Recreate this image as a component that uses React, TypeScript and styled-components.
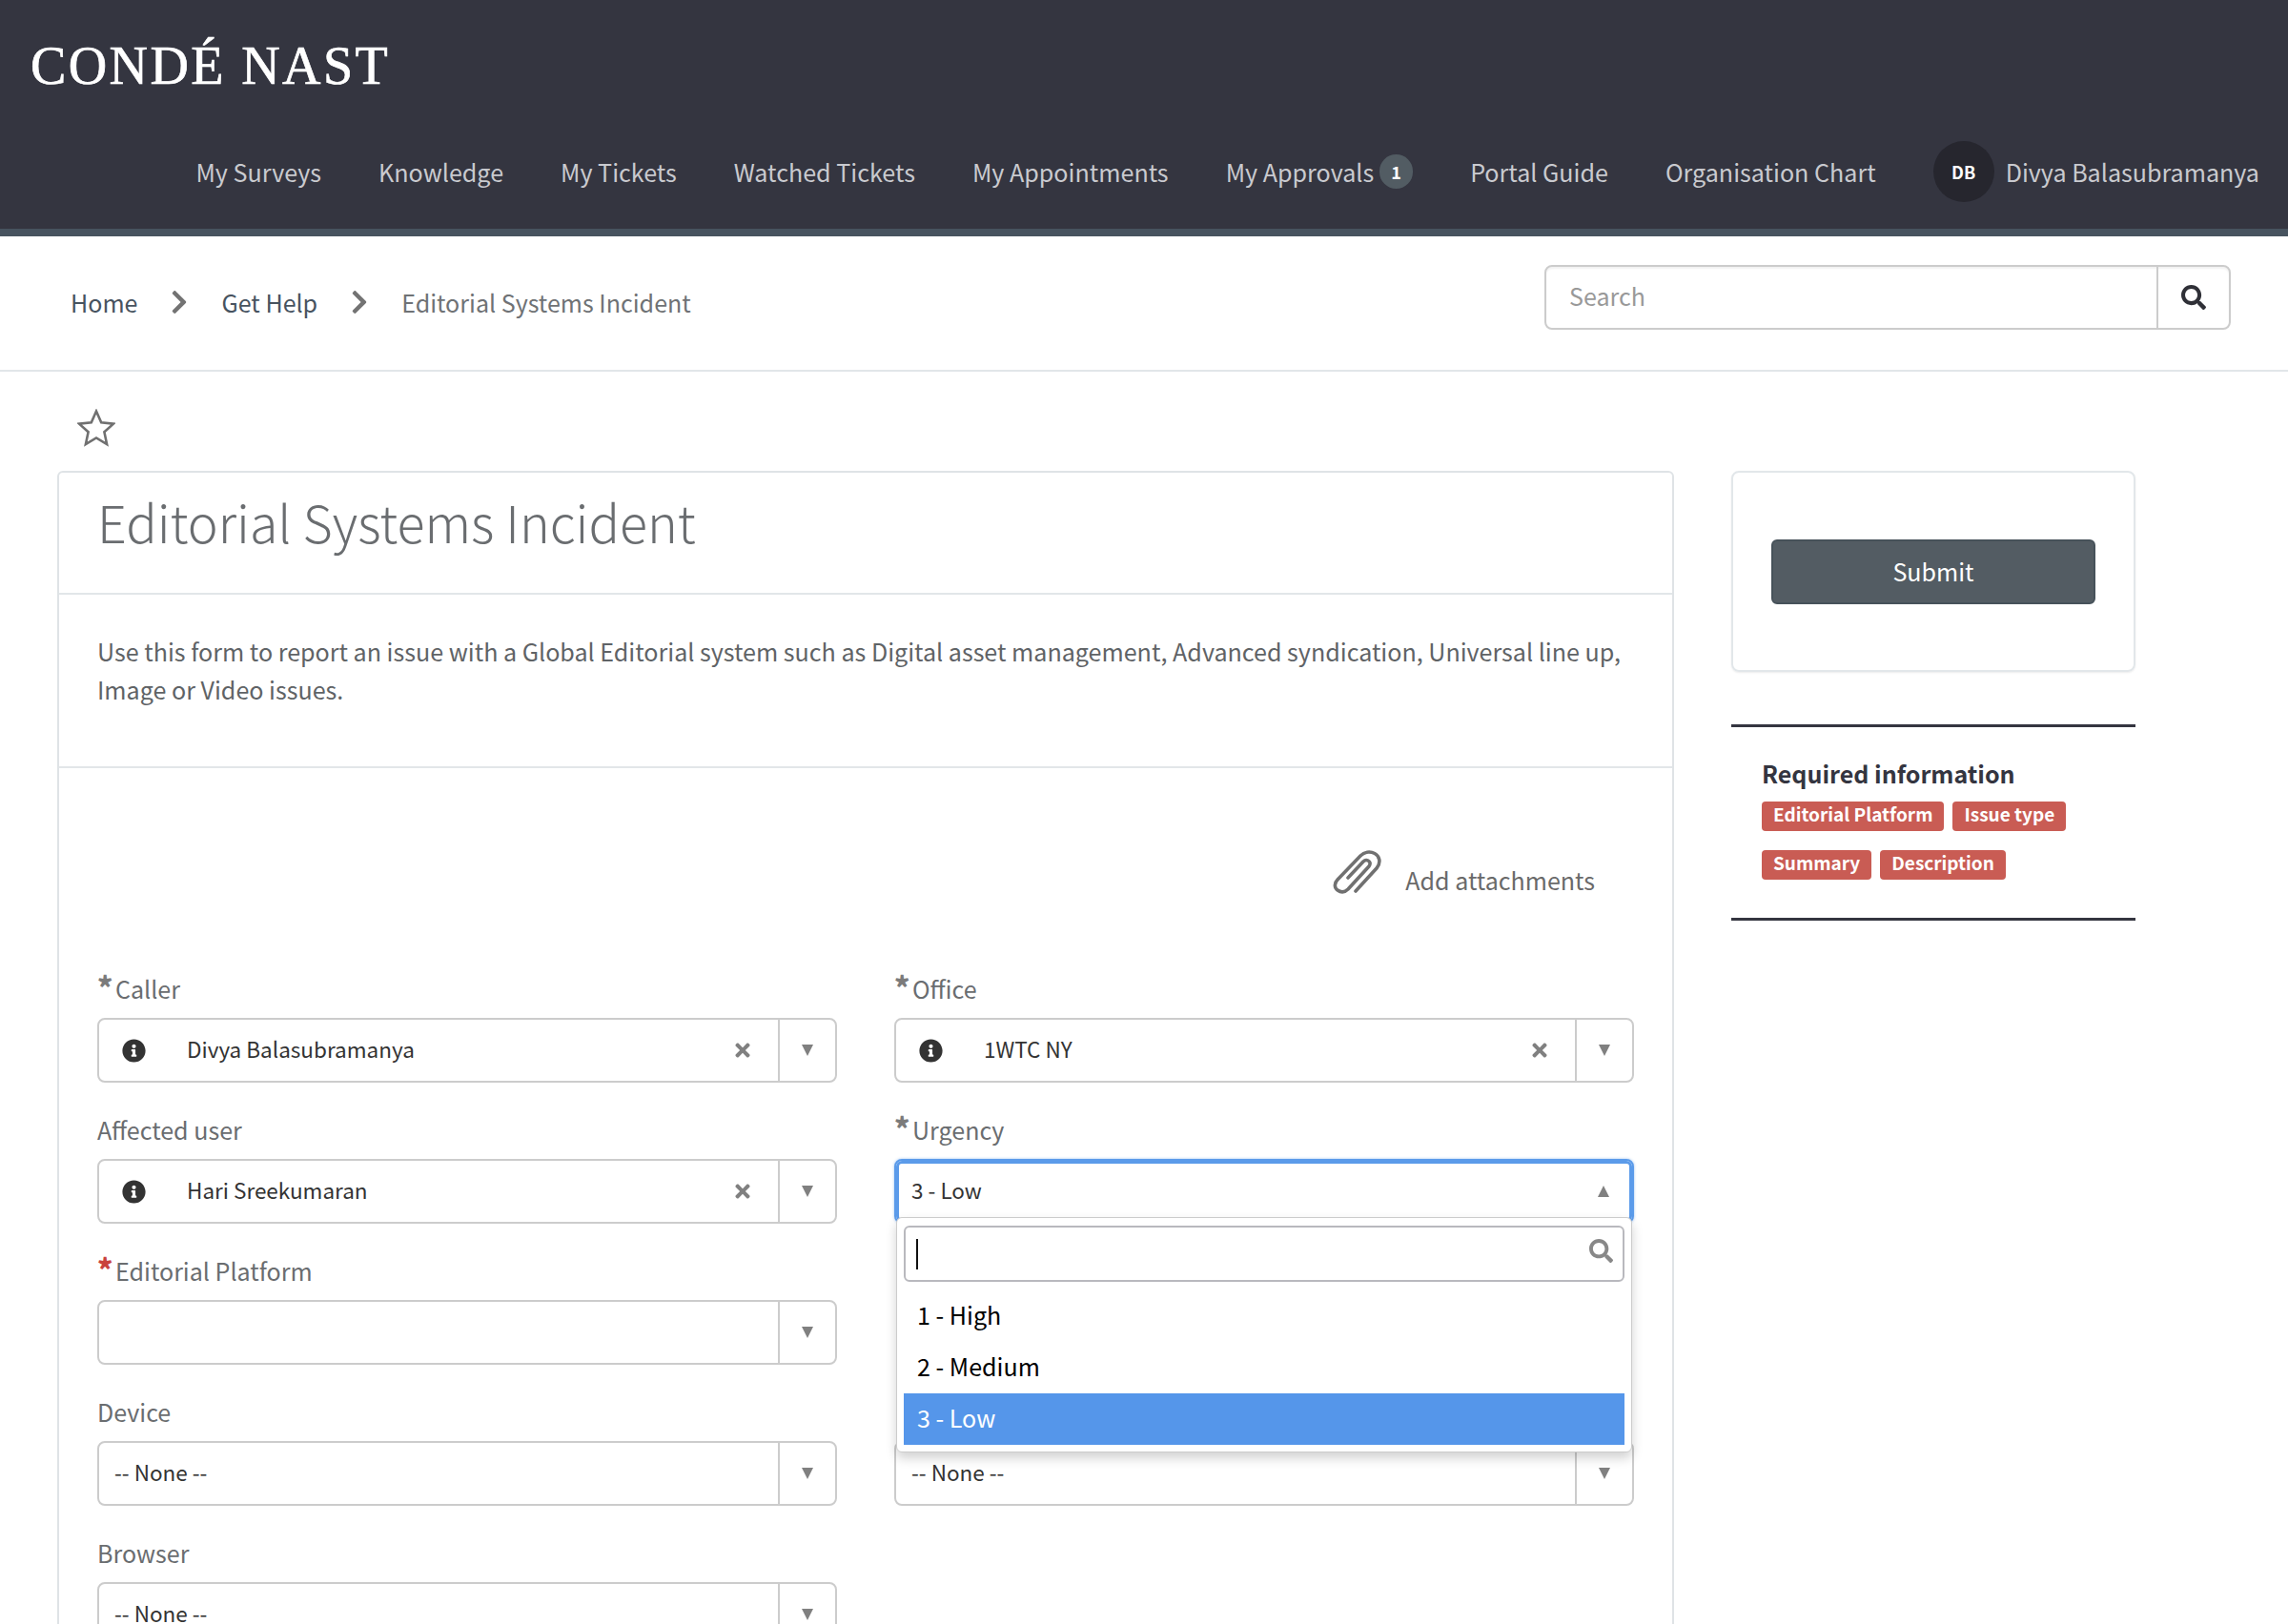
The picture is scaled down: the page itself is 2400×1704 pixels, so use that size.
import React from 'react';
import styled, { createGlobalStyle } from 'styled-components';
import { FaInfoCircle, FaTimes, FaSearch, FaChevronRight } from 'react-icons/fa';

const GlobalStyle = createGlobalStyle`
  html, body {
    margin: 0;
    height: 100%;
    overflow: hidden;
    background: #fff;
  }
  * { box-sizing: border-box; }
  body {
    font-family: 'Noto Sans CJK SC', 'Noto Sans', sans-serif;
    font-size: 25.05px;
    color: #343540;
  }
`;

const S = {
  Header: styled.header`
    height: 248px;
    background: #343540;
    border-bottom: 8px solid #47535f;
  `,
  Logo: styled.div`
    height: 148px;
    padding: 28px 0 0 32px;
    font-family: 'Liberation Serif', serif;
    font-size: 56px;
    line-height: 82px;
    letter-spacing: 2.4px;
    color: #fff;
    -webkit-text-stroke: 0.7px #fff;
  `,
  Nav: styled.nav`
    display: flex;
    align-items: center;
    justify-content: flex-end;
    gap: 60px;
    height: 64px;
    padding-right: 30px;
  `,
  NavItem: styled.a`
    display: flex;
    align-items: center;
    font-size: 25.1px;
    line-height: 39px;
    color: #c9cacf;
  `,
  Badge: styled.span`
    display: inline-flex;
    align-items: center;
    justify-content: center;
    width: 35px;
    height: 36px;
    margin-left: 6px;
    border-radius: 18px;
    background: #525c63;
    color: #fff;
    font-size: 18px;
    font-weight: 700;
  `,
  Avatar: styled.span`
    display: inline-flex;
    align-items: center;
    justify-content: center;
    width: 64px;
    height: 64px;
    margin-right: 12px;
    border-radius: 50%;
    background: #26262e;
    color: #fff;
    font-size: 18px;
    font-weight: 700;
  `,
  SubBar: styled.div`
    display: flex;
    align-items: center;
    justify-content: space-between;
    height: 142px;
    padding: 0 60px 0 74px;
    border-bottom: 2px solid #e2e6e9;
  `,
  Crumbs: styled.div`
    display: flex;
    align-items: center;
    gap: 30px;
    margin-top: -2px;
    line-height: 40px;
  `,
  Crumb: styled.a<{ $current?: boolean }>`
    color: ${p => (p.$current ? '#6f7275' : '#47535f')};
  `,
  CrumbArrow: styled.span`
    display: flex;
    color: #737373;
    font-size: 28px;
  `,
  SearchBox: styled.div`
    display: flex;
    align-self: flex-start;
    width: 720px;
    height: 68px;
    margin-top: 30px;
    border: 2px solid #ccc;
    border-radius: 8px;
    box-shadow: inset 0 2px 2px rgba(0, 0, 0, 0.06);
  `,
  SearchInput: styled.div`
    flex: 1;
    padding-left: 24px;
    line-height: 61px;
    color: #999;
  `,
  SearchButton: styled.div`
    display: flex;
    align-items: center;
    justify-content: center;
    width: 76px;
    border-left: 2px solid #ccc;
    color: #2f3037;
    font-size: 26px;
  `,
  Content: styled.div`
    padding-left: 60px;
  `,
  StarRow: styled.div`
    height: 104px;
    padding: 39px 0 0 21px;
  `,
  Columns: styled.div`
    display: flex;
    gap: 60px;
    align-items: flex-start;
  `,
  Card: styled.main`
    width: 1696px;
    border: 2px solid #dfe3e6;
    border-radius: 6px 6px 0 0;
  `,
  TitleBar: styled.div`
    height: 128px;
    padding: 0 40px;
    border-bottom: 2px solid #e2e6e9;
  `,
  Title: styled.h1`
    margin: 0;
    font-size: 53.8px;
    font-weight: 300;
    line-height: 102px;
    color: #6a6d70;
  `,
  Description: styled.p`
    height: 182px;
    margin: 0;
    padding: 39px 40px 0;
    border-bottom: 2px solid #e2e6e9;
    font-size: 25.08px;
    line-height: 40px;
    color: #5f6366;
  `,
  AttachRow: styled.div`
    display: flex;
    justify-content: flex-end;
    gap: 24px;
    height: 212px;
    padding: 86px 81px 0 0;
  `,
  AttachText: styled.span`
    margin-top: 11px;
    line-height: 40px;
    color: #6a6a6a;
  `,
  FormGrid: styled.div`
    display: grid;
    grid-template-columns: 776px 776px;
    column-gap: 60px;
    padding: 0 40px;
  `,
  FormColumn: styled.div`
    display: flex;
    flex-direction: column;
    gap: 30px;
  `,
  Field: styled.div`
    position: relative;
    height: 118px;
  `,
  Label: styled.label`
    display: block;
    height: 40px;
    margin-bottom: 10px;
    line-height: 38px;
    color: #6a6d70;
  `,
  Asterisk: styled.span<{ $red?: boolean }>`
    position: relative;
    top: 0;
    display: inline-block;
    width: 19px;
    height: 0;
    font-size: 31px;
    font-weight: 900;
    line-height: 0;
    color: ${p => (p.$red ? '#c9423c' : '#7b7b7b')};
  `,
  Box: styled.div<{ $focus?: boolean }>`
    display: flex;
    align-items: center;
    height: 68px;
    border: 2px solid ${p => (p.$focus ? '#5b9bea' : '#ccc')};
    border-radius: 8px;
    background: #fff;
    box-shadow: ${p => (p.$focus ? 'inset 0 0 0 3px #5b9bea, 0 0 3px rgba(91,155,234,.6)' : 'none')};
    font-size: 22.5px;
    color: #333;
  `,
  InfoIcon: styled.span`
    display: flex;
    justify-content: center;
    width: 72px;
    color: #333;
    font-size: 25px;
  `,
  Value: styled.span<{ $withIcon?: boolean }>`
    flex: 1;
    margin-top: -4px;
    padding-left: ${p => (p.$withIcon ? '20px' : '16px')};
    white-space: nowrap;
  `,
  Clear: styled.span`
    display: flex;
    justify-content: center;
    width: 74px;
    color: #808080;
    font-size: 22px;
    stroke: currentColor;
    stroke-width: 40px;
  `,
  CaretCell: styled.span<{ $divider?: boolean }>`
    display: flex;
    align-items: center;
    justify-content: center;
    align-self: stretch;
    width: 60px;
    border-left: ${p => (p.$divider ? '2px solid #ccc' : '0')};
  `,
  Caret: styled.i<{ $up?: boolean }>`
    width: 0;
    height: 0;
    border-left: 6.5px solid transparent;
    border-right: 6.5px solid transparent;
    border-top: ${p => (p.$up ? '0' : '12px solid #808080')};
    border-bottom: ${p => (p.$up ? '12px solid #808080' : '0')};
  `,
  Dropdown: styled.div`
    position: absolute;
    z-index: 5;
    top: 111px;
    left: 2px;
    right: 2px;
    height: 247px;
    padding: 8px 7px;
    border: 1px solid #ccc;
    border-radius: 6px;
    background: #fff;
    box-shadow: 0 6px 12px rgba(0, 0, 0, 0.18);
  `,
  DropSearch: styled.div`
    display: flex;
    align-items: center;
    justify-content: space-between;
    height: 59px;
    margin-bottom: 9px;
    padding: 0 10px 6px 11px;
    border: 2px solid #b9b9be;
    border-radius: 6px;
    color: #888;
    font-size: 25px;
  `,
  TextCursor: styled.span`
    width: 2px;
    height: 32px;
    margin-top: 6px;
    background: #111;
  `,
  Option: styled.div<{ $active?: boolean }>`
    height: 54px;
    padding-left: 14px;
    line-height: 50px;
    color: ${p => (p.$active ? '#fff' : '#000')};
    background: ${p => (p.$active ? '#5596ea' : 'transparent')};
  `,
  Sidebar: styled.aside`
    width: 424px;
  `,
  SubmitCard: styled.div`
    height: 211px;
    padding: 70px 40px;
    border: 2px solid #e2e7ea;
    border-radius: 8px;
    box-shadow: 0 1px 2px rgba(0, 0, 0, 0.08);
  `,
  SubmitButton: styled.button`
    display: block;
    width: 340px;
    height: 68px;
    padding: 0 0 3px;
    border: 2px solid #47525a;
    border-radius: 6px;
    background: #535c63;
    color: #fff;
    font-family: inherit;
    font-size: 25.05px;
  `,
  Required: styled.section`
    height: 206px;
    margin-top: 55px;
    padding: 28px 29px 0 32px;
    border-top: 3px solid #343540;
    border-bottom: 3px solid #343540;
  `,
  RequiredTitle: styled.h4`
    margin: 0 0 10px;
    font-size: 25.05px;
    font-weight: 700;
    line-height: 40px;
    color: #343540;
  `,
  TagList: styled.div`
    display: flex;
    flex-wrap: wrap;
    gap: 20px 9px;
  `,
  Tag: styled.span`
    height: 31px;
    padding: 0 12px;
    border-radius: 4px;
    background: #c95c54;
    color: #fff;
    font-size: 19px;
    font-weight: 700;
    line-height: 26px;
  `,
};

const navItems = ['My Surveys', 'Knowledge', 'My Tickets', 'Watched Tickets', 'My Appointments'];
const navItemsAfter = ['Portal Guide', 'Organisation Chart'];
const requiredTags = ['Editorial Platform', 'Issue type', 'Summary', 'Description'];

const StarIcon = () => (
  <svg width="40" height="40" viewBox="0 0 40 40" fill="none">
    <polygon
      points="20,2.5 25.2,14.2 38,15.6 28.4,24.2 31.1,37 20,30.4 8.9,37 11.6,24.2 2,15.6 14.8,14.2"
      stroke="#707070"
      strokeWidth="2.6"
      strokeLinejoin="miter"
    />
  </svg>
);

const PaperclipIcon = () => (
  <svg width="52" height="46" viewBox="0 0 52 46" fill="none">
    <path
      d="M24 43 L46 19 C51 13 49 6 44 3.5 C39 1 33 2 29 6 L5 31 C1 35 2 40 5 42 C9 45 13 44 16 41 L38 17 C40 14 39 12 37 11 C35 10 33 11 32 12 L16 29"
      stroke="#707070"
      strokeWidth="3.6"
      strokeLinecap="round"
      strokeLinejoin="round"
    />
  </svg>
);

interface SelectFieldProps {
  label?: string;
  mandatory?: 'grey' | 'red';
  value?: string;
  lookup?: boolean;
}

const SelectBox: React.FC<Omit<SelectFieldProps, 'label' | 'mandatory'>> = ({ value, lookup }) => (
  <S.Box>
    {lookup && (
      <S.InfoIcon>
        <FaInfoCircle />
      </S.InfoIcon>
    )}
    <S.Value $withIcon={lookup}>{value}</S.Value>
    {lookup && (
      <S.Clear>
        <FaTimes />
      </S.Clear>
    )}
    <S.CaretCell $divider>
      <S.Caret />
    </S.CaretCell>
  </S.Box>
);

const SelectField: React.FC<SelectFieldProps> = ({ label, mandatory, value, lookup }) => (
  <S.Field>
    <S.Label>
      {mandatory && <S.Asterisk $red={mandatory === 'red'}>*</S.Asterisk>}
      {label}
    </S.Label>
    <SelectBox value={value} lookup={lookup} />
  </S.Field>
);

const UrgencyField = () => (
  <S.Field>
    <S.Label>
      <S.Asterisk>*</S.Asterisk>Urgency
    </S.Label>
    <S.Box $focus>
      <S.Value>3 - Low</S.Value>
      <S.CaretCell>
        <S.Caret $up />
      </S.CaretCell>
    </S.Box>
    <S.Dropdown>
      <S.DropSearch>
        <S.TextCursor />
        <FaSearch />
      </S.DropSearch>
      <S.Option>1 - High</S.Option>
      <S.Option>2 - Medium</S.Option>
      <S.Option $active>3 - Low</S.Option>
    </S.Dropdown>
  </S.Field>
);

const App: React.FC = () => (
  <>
    <GlobalStyle />
    <S.Header>
      <S.Logo>CONDÉ NAST</S.Logo>
      <S.Nav>
        {navItems.map(item => (
          <S.NavItem key={item}>{item}</S.NavItem>
        ))}
        <S.NavItem>
          My Approvals<S.Badge>1</S.Badge>
        </S.NavItem>
        {navItemsAfter.map(item => (
          <S.NavItem key={item}>{item}</S.NavItem>
        ))}
        <S.NavItem>
          <S.Avatar>DB</S.Avatar>Divya Balasubramanya
        </S.NavItem>
      </S.Nav>
    </S.Header>

    <S.SubBar>
      <S.Crumbs>
        <S.Crumb>Home</S.Crumb>
        <S.CrumbArrow>
          <FaChevronRight />
        </S.CrumbArrow>
        <S.Crumb>Get Help</S.Crumb>
        <S.CrumbArrow>
          <FaChevronRight />
        </S.CrumbArrow>
        <S.Crumb $current>Editorial Systems Incident</S.Crumb>
      </S.Crumbs>
      <S.SearchBox>
        <S.SearchInput>Search</S.SearchInput>
        <S.SearchButton>
          <FaSearch />
        </S.SearchButton>
      </S.SearchBox>
    </S.SubBar>

    <S.Content>
      <S.StarRow>
        <StarIcon />
      </S.StarRow>
      <S.Columns>
        <S.Card>
          <S.TitleBar>
            <S.Title>Editorial Systems Incident</S.Title>
          </S.TitleBar>
          <S.Description>
            Use this form to report an issue with a Global Editorial system such as Digital asset management, Advanced
            syndication, Universal line up, Image or Video issues.
          </S.Description>
          <S.AttachRow>
            <PaperclipIcon />
            <S.AttachText>Add attachments</S.AttachText>
          </S.AttachRow>
          <S.FormGrid>
            <S.FormColumn>
              <SelectField label="Caller" mandatory="grey" value="Divya Balasubramanya" lookup />
              <SelectField label="Affected user" value="Hari Sreekumaran" lookup />
              <SelectField label="Editorial Platform" mandatory="red" />
              <SelectField label="Device" value="-- None --" />
              <SelectField label="Browser" value="-- None --" />
            </S.FormColumn>
            <S.FormColumn>
              <SelectField label="Office" mandatory="grey" value="1WTC NY" lookup />
              <UrgencyField />
              <S.Field />
              <SelectField value="-- None --" />
            </S.FormColumn>
          </S.FormGrid>
        </S.Card>
        <S.Sidebar>
          <S.SubmitCard>
            <S.SubmitButton>Submit</S.SubmitButton>
          </S.SubmitCard>
          <S.Required>
            <S.RequiredTitle>Required information</S.RequiredTitle>
            <S.TagList>
              {requiredTags.map(tag => (
                <S.Tag key={tag}>{tag}</S.Tag>
              ))}
            </S.TagList>
          </S.Required>
        </S.Sidebar>
      </S.Columns>
    </S.Content>
  </>
);

export default App;
